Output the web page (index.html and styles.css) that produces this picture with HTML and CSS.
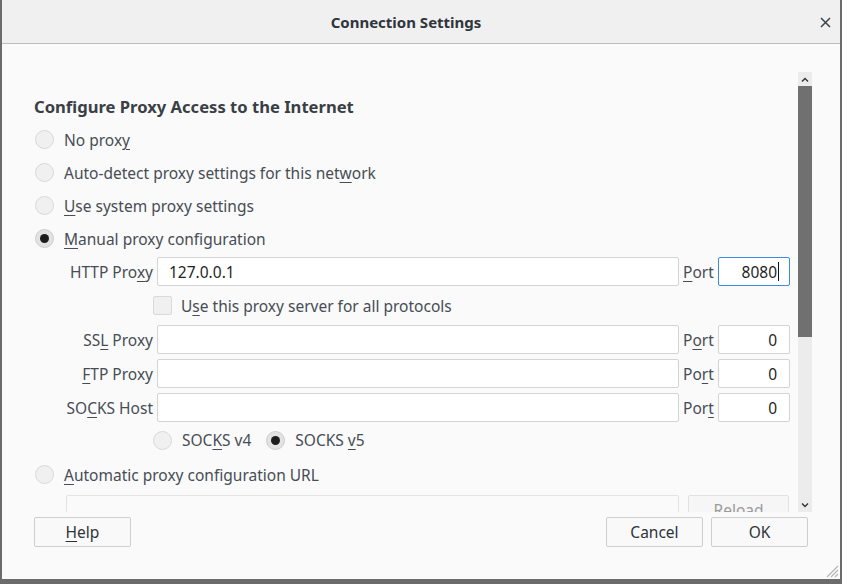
FILE: index.html
```html
<!DOCTYPE html>
<html>
<head>
<meta charset="utf-8">
<title>Connection Settings</title>
<link rel="stylesheet" href="styles.css">
</head>
<body>
<div class="window">
  <header class="titlebar">
    <div class="title">Connection Settings</div>
    <div class="close">
      <svg width="11" height="11" viewBox="0 0 11 11"><path d="M1 1L10 10M10 1L1 10" stroke="#3d434b" stroke-width="1.5" fill="none"/></svg>
    </div>
  </header>
  <div class="main">
    <div class="scroll">
      <h1 class="heading">Configure Proxy Access to the Internet</h1>
      <div class="radio-row"><span class="radio"></span><span>No prox<u>y</u></span></div>
      <div class="radio-row"><span class="radio"></span><span>Auto-detect proxy settings for this net<u>w</u>ork</span></div>
      <div class="radio-row"><span class="radio"></span><span><u>U</u>se system proxy settings</span></div>
      <div class="radio-row"><span class="radio checked"></span><span><u>M</u>anual proxy configuration</span></div>

      <div class="proxy">
        <div class="field-row first">
          <span class="lbl">HTTP Pro<u>x</u>y</span>
          <div class="input host">127.0.0.1</div>
          <span class="port"><u>P</u>ort</span>
          <div class="input num focused">8080<span class="caret"></span></div>
        </div>
        <div class="check-row"><span class="checkbox"></span><span>U<u>s</u>e this proxy server for all protocols</span></div>
        <div class="field-row">
          <span class="lbl">SS<u>L</u> Proxy</span>
          <div class="input host"></div>
          <span class="port">P<u>o</u>rt</span>
          <div class="input num">0</div>
        </div>
        <div class="field-row gap">
          <span class="lbl"><u>F</u>TP Proxy</span>
          <div class="input host"></div>
          <span class="port">Po<u>r</u>t</span>
          <div class="input num">0</div>
        </div>
        <div class="field-row gap">
          <span class="lbl">SO<u>C</u>KS Host</span>
          <div class="input host"></div>
          <span class="port">Por<u>t</u></span>
          <div class="input num">0</div>
        </div>
        <div class="socks-row">
          <span class="radio"></span><span class="socks-lbl">SOC<u>K</u>S v4</span>
          <span class="radio checked"></span><span>SOCKS <u>v</u>5</span>
        </div>
      </div>

      <div class="radio-row"><span class="radio"></span><span><u>A</u>utomatic proxy configuration URL</span></div>
      <div class="url-row">
        <div class="input url disabled"></div>
        <div class="btn reload">Reload</div>
      </div>
    </div>
    <div class="scrollbar">
      <div class="sb-btn"><svg width="8" height="5" viewBox="0 0 8 5"><path d="M1 4.5L4 1.5L7 4.5" stroke="#333" stroke-width="1.4" fill="none"/></svg></div>
      <div class="sb-thumb"></div>
      <div class="sb-track"></div>
      <div class="sb-btn"><svg width="8" height="5" viewBox="0 0 8 5"><path d="M1 0.5L4 3.5L7 0.5" stroke="#333" stroke-width="1.4" fill="none"/></svg></div>
    </div>
  </div>
  <footer class="footer">
    <div class="btn"><u>H</u>elp</div>
    <div class="spacer"></div>
    <div class="btn">Cancel</div>
    <div class="btn">OK</div>
  </footer>
  <svg class="grip" width="13" height="13" viewBox="0 0 13 13">
    <path d="M12 1L1 12M12 5L5 12M12 9L9 12" stroke="#b5b5b5" stroke-width="1.2" fill="none"/>
  </svg>
</div>
</body>
</html>
```
FILE: styles.css
```css
html, body {
  margin: 0;
  padding: 0;
}
body {
  background: #6b6b6b;
  width: 842px;
  height: 584px;
  overflow: hidden;
  font-family: "Noto Sans", "Open Sans", sans-serif;
  font-size: 15.5px;
  color: #474d55;
}
u {
  text-decoration: underline;
  text-decoration-thickness: 1px;
  text-underline-offset: 3px;
}
.window {
  position: relative;
  margin-left: 2px;
  width: 838px;
  height: 579px;
  background: #fafafa;
  display: flex;
  flex-direction: column;
}
.titlebar {
  height: 43px;
  flex: none;
  background: #f0f0f0;
  border-bottom: 1px solid #bdbdbd;
  display: flex;
  align-items: center;
}
.title {
  flex: 1;
  text-align: center;
  font-weight: 700;
  font-size: 15px;
  color: #2f353c;
  padding-top: 1px;
}
.close {
  width: 30px;
  display: flex;
  justify-content: center;
  align-items: center;
  padding-top: 2px;
}
.main {
  height: 468px;
  flex: none;
  display: flex;
}
.scroll {
  flex: 1;
  overflow: hidden;
  padding: 52px 8px 0 32px;
}
.heading {
  margin: 0;
  font-size: 16.6px;
  line-height: 22px;
  font-weight: 700;
  color: #3a3f46;
}
.radio-row {
  height: 33px;
  display: flex;
  align-items: center;
}
.heading + .radio-row {
  margin-top: 5px;
}
.radio {
  flex: none;
  width: 17px;
  height: 17px;
  border-radius: 50%;
  background: #f0f0f0;
  border: 1px solid #d9d9d9;
  margin: 0 10px 0 1px;
  position: relative;
}
.radio.checked {
  background: #e2e2e2;
  border-color: #cdcdcd;
}
.radio.checked::after {
  content: "";
  position: absolute;
  left: 4px;
  top: 4px;
  width: 9px;
  height: 9px;
  border-radius: 50%;
  background: #1c1c1c;
}
.proxy {
  margin-left: 32px;
  margin-top: 2px;
}
.field-row {
  display: flex;
  align-items: center;
  gap: 4px;
  height: 29px;
}
.field-row.gap {
  margin-top: 5px;
}
.lbl {
  width: 87px;
  text-align: right;
  flex: none;
  white-space: nowrap;
}
.input {
  box-sizing: border-box;
  height: 29px;
  background: #fff;
  border: 1px solid #d4d4d4;
  border-radius: 2px;
  color: #1f1f1f;
  display: flex;
  align-items: center;
  font-size: 15.5px;
}
.input.host {
  width: 522px;
  padding-left: 11px;
}
.input.num {
  width: 72px;
  justify-content: flex-end;
  padding-right: 12px;
}
.input.focused {
  border-color: #3b8be6;
}
.caret {
  display: inline-block;
  width: 1px;
  height: 19px;
  background: #111;
  margin-left: 1px;
  margin-right: -2px;
}
.port {
  width: 31px;
  flex: none;
  white-space: nowrap;
}
.check-row {
  height: 39px;
  display: flex;
  align-items: center;
  padding-left: 87px;
}
.checkbox {
  box-sizing: border-box;
  width: 19px;
  height: 19px;
  border-radius: 2px;
  background: #f0f0f0;
  border: 1px solid #d9d9d9;
  margin-right: 9px;
}
.socks-row {
  height: 36px;
  display: flex;
  align-items: center;
  padding-left: 86px;
}
.socks-lbl {
  margin-right: 14px;
}
.url-row {
  display: flex;
  margin-top: 4px;
  gap: 9px;
}
.input.url {
  width: 613px;
  margin-left: 32px;
}
.input.disabled {
  background: #fafafa;
  border-color: #e3e3e3;
}
.btn {
  box-sizing: border-box;
  width: 97px;
  height: 30px;
  border: 1px solid #cecece;
  border-radius: 2px;
  background: #f9f9f9;
  color: #2e3338;
  display: flex;
  align-items: center;
  justify-content: center;
}
.btn.reload {
  width: 101px;
  height: 29px;
  color: #9b9b9b;
  border-color: #e2e2e2;
  background: #f6f6f6;
}
.scrollbar {
  width: 14px;
  margin: 28px 28px 0 0;
  background: #ececec;
  display: flex;
  flex-direction: column;
}
.sb-btn {
  height: 14px;
  flex: none;
  display: flex;
  align-items: center;
  justify-content: center;
}
.sb-thumb {
  height: 251px;
  flex: none;
  background: #707070;
}
.sb-track {
  flex: 1;
}
.footer {
  flex: 1;
  display: flex;
  gap: 8px;
  padding: 5px 32px 0 32px;
  align-items: flex-start;
}
.spacer {
  flex: 1;
}
.grip {
  position: absolute;
  right: 1px;
  bottom: 1px;
}
```
